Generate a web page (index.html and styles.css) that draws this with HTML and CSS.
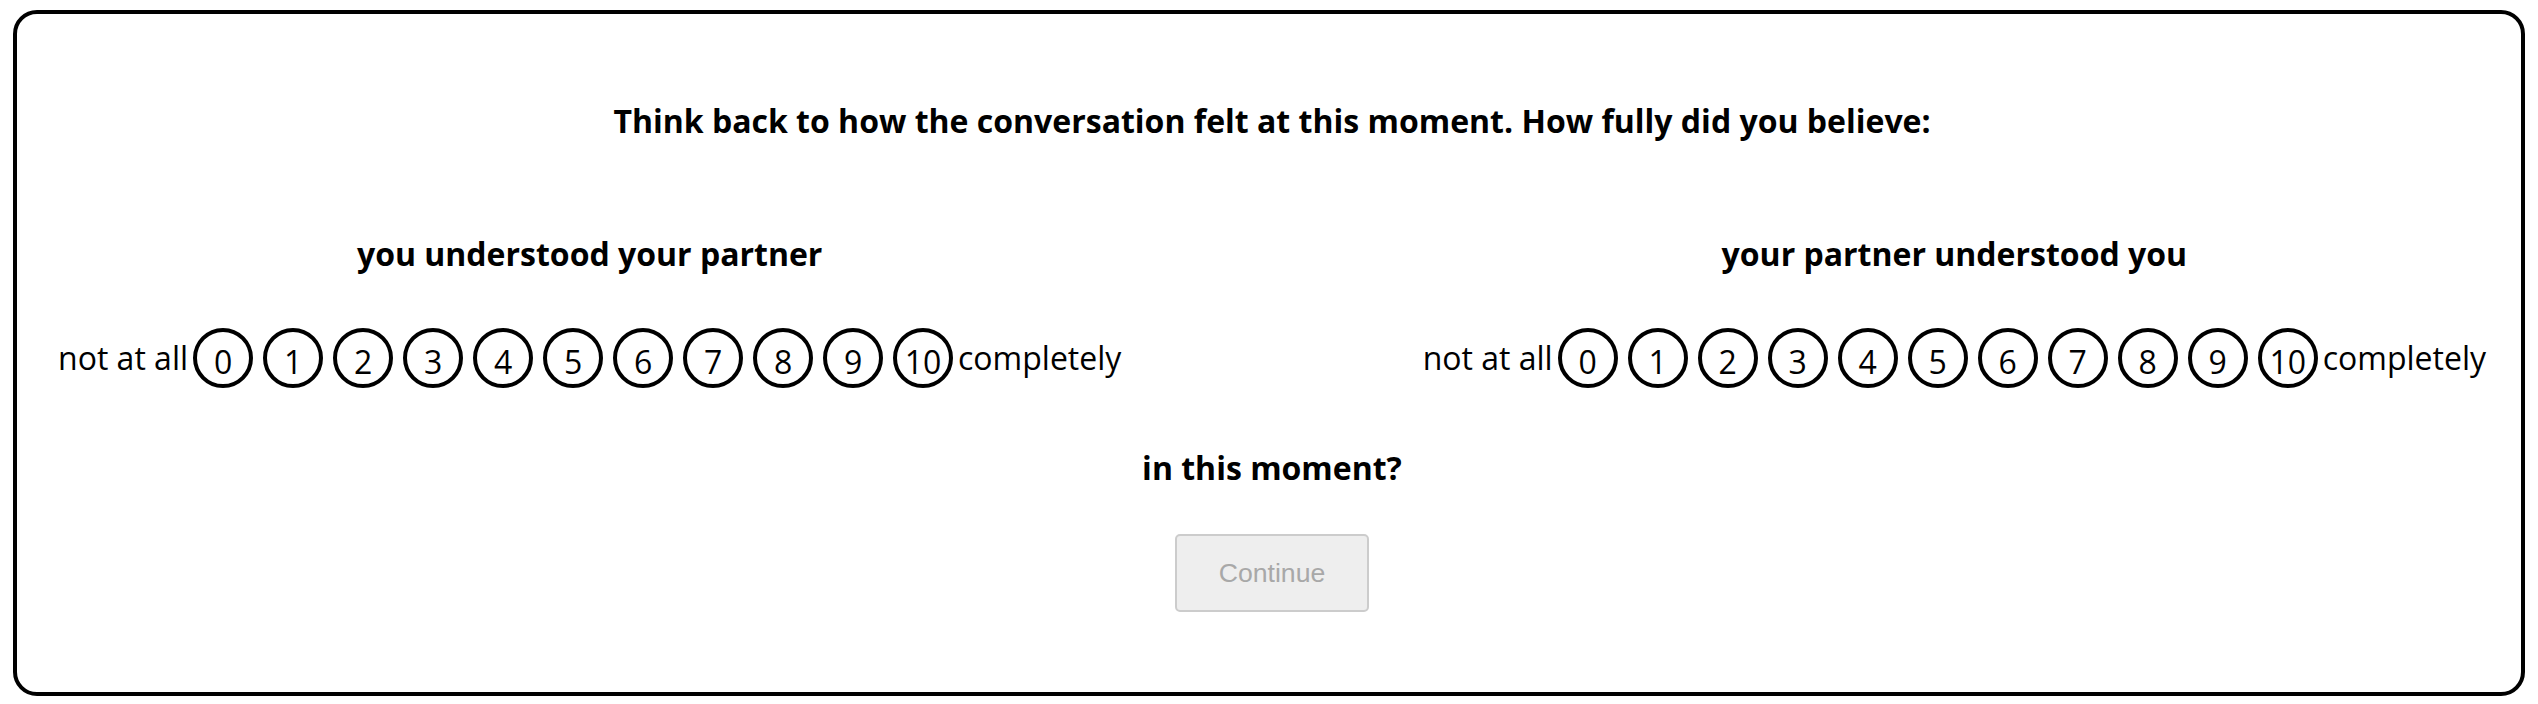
FILE: index.html
```html
<!DOCTYPE html>
<html>
<head>
<meta charset="utf-8">
<link rel="stylesheet" href="styles.css">
</head>
<body>
<div class="card">
  <div class="prompt">Think back to how the conversation felt at this moment. How fully did you believe:</div>
  <div class="scales">
    <div class="scale">
      <div class="scale-title">you understood your partner</div>
      <div class="likert">
        <span class="anchor">not at all</span>
        <span class="opt">0</span><span class="opt">1</span><span class="opt">2</span><span class="opt">3</span><span class="opt">4</span><span class="opt">5</span><span class="opt">6</span><span class="opt">7</span><span class="opt">8</span><span class="opt">9</span><span class="opt">10</span>
        <span class="anchor">completely</span>
      </div>
    </div>
    <div class="scale">
      <div class="scale-title">your partner understood you</div>
      <div class="likert">
        <span class="anchor">not at all</span>
        <span class="opt">0</span><span class="opt">1</span><span class="opt">2</span><span class="opt">3</span><span class="opt">4</span><span class="opt">5</span><span class="opt">6</span><span class="opt">7</span><span class="opt">8</span><span class="opt">9</span><span class="opt">10</span>
        <span class="anchor">completely</span>
      </div>
    </div>
  </div>
  <div class="suffix">in this moment?</div>
  <button class="continue" disabled>Continue</button>
</div>
</body>
</html>
```
FILE: styles.css
```css
html, body {
  margin: 0;
  padding: 0;
  background: #fff;
}
body {
  font-family: "Open Sans", "DejaVu Sans", sans-serif;
  font-size: 32px;
  color: #000;
}
.card {
  margin: 10px 13px 0;
  border: 4px solid #000;
  border-radius: 24px;
  padding: 85px 32px 80px 38px;
  display: flex;
  flex-direction: column;
  align-items: center;
}
.prompt {
  font-weight: 700;
  line-height: 44px;
  text-align: center;
}
.scales {
  align-self: stretch;
  display: flex;
  justify-content: space-between;
  margin-top: 89px;
  padding: 0 3px;
}
.scale {
  display: flex;
  flex-direction: column;
  align-items: center;
}
.scale-title {
  font-weight: 700;
  line-height: 44px;
}
.likert {
  display: flex;
  align-items: center;
  margin-top: 52px;
}
.anchor {
  line-height: 44px;
}
.opt {
  box-sizing: border-box;
  width: 60px;
  height: 60px;
  margin: 0 5px;
  border: 4px solid #000;
  border-radius: 50%;
  display: flex;
  align-items: center;
  justify-content: center;
  line-height: 44px;
  padding-top: 8px;
}
.suffix {
  font-weight: 700;
  line-height: 44px;
  margin-top: 58px;
}
.continue {
  margin-top: 44px;
  width: 194px;
  height: 78px;
  font-family: "Liberation Sans", Arial, sans-serif;
  font-size: 26.67px;
  color: #a8a8a8;
  background: #eeeeee;
  border: 2px solid #cccccc;
  border-radius: 5px;
  padding: 0;
}
```
